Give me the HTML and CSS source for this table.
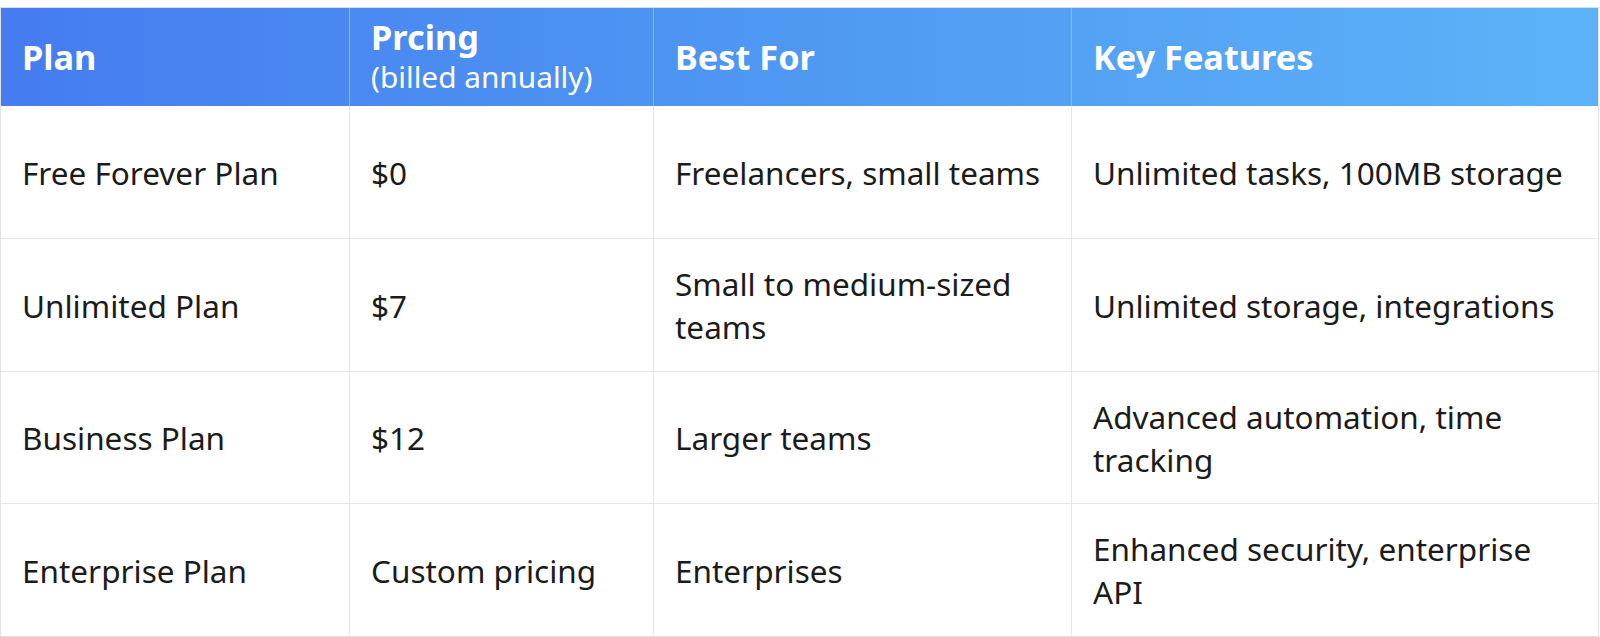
FILE: index.html
```html
<!DOCTYPE html>
<html>
<head>
<meta charset="utf-8">
<link rel="stylesheet" href="styles.css">
</head>
<body>
<div class="table">
  <div class="row head">
    <div class="cell">Plan</div>
    <div class="cell"><div>Prcing</div><div class="sub">(billed annually)</div></div>
    <div class="cell">Best For</div>
    <div class="cell">Key Features</div>
  </div>
  <div class="row">
    <div class="cell">Free Forever Plan</div>
    <div class="cell">$0</div>
    <div class="cell">Freelancers, small teams</div>
    <div class="cell">Unlimited tasks, 100MB storage</div>
  </div>
  <div class="row">
    <div class="cell">Unlimited Plan</div>
    <div class="cell">$7</div>
    <div class="cell">Small to medium-sized teams</div>
    <div class="cell">Unlimited storage, integrations</div>
  </div>
  <div class="row r3">
    <div class="cell">Business Plan</div>
    <div class="cell">$12</div>
    <div class="cell">Larger teams</div>
    <div class="cell">Advanced automation, time tracking</div>
  </div>
  <div class="row">
    <div class="cell">Enterprise Plan</div>
    <div class="cell">Custom pricing</div>
    <div class="cell">Enterprises</div>
    <div class="cell">Enhanced security, enterprise API</div>
  </div>
</div>
</body>
</html>
```
FILE: styles.css
```css
html, body {
  margin: 0;
  padding: 0;
  background: #ffffff;
}
body {
  font-family: "Noto Sans", "Open Sans", sans-serif;
  color: #1b1b1b;
  padding-top: 7px;
}
.table {
  width: 1599px;
  border: 1px solid #e2e2e2;
  border-top-color: #d8dde6;
  box-sizing: border-box;
}
.row {
  display: grid;
  grid-template-columns: 349px 304px 418px 1fr;
  height: 133px;
  border-bottom: 1px solid #e6e6e6;
  box-sizing: border-box;
}
.row:last-child {
  border-bottom: none;
  height: 132px;
}
.row.r3 {
  height: 132px;
}
.cell {
  display: flex;
  flex-direction: column;
  justify-content: center;
  padding: 0 24px 0 21px;
  font-size: 31.5px;
  line-height: 43px;
  border-right: 1px solid #e6e6e6;
}
.cell:last-child {
  border-right: none;
}
.head {
  height: 98px;
  background: linear-gradient(90deg, #457cf0 0%, #4e96f2 45%, #5cb3f8 100%);
  border-bottom: none;
}
.head .cell {
  color: #ffffff;
  font-weight: 700;
  font-size: 34.3px;
  line-height: 40px;
  border-right: 1px solid #8ab8f5;
}
.head .cell:last-child {
  border-right: none;
}
.head .sub {
  font-weight: 400;
  font-size: 29.8px;
  line-height: 40px;
}
```
